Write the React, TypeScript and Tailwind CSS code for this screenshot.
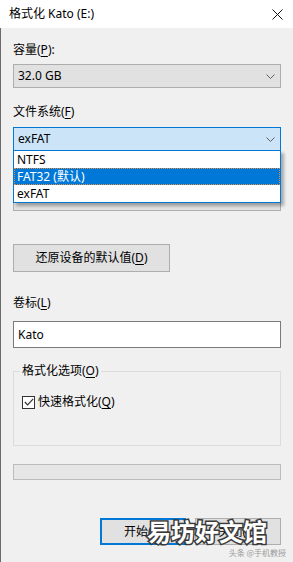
import React from 'react';

// Windows 10 "Format drive" dialog with the file system list opened

const Chevron: React.FC = () => (
  <svg width="9" height="5" viewBox="0 0 9 5" className="shrink-0">
    <polyline points="0.5,0.5 4.5,4.5 8.5,0.5" fill="none" stroke="#606060" strokeWidth="1" />
  </svg>
);

const Key: React.FC<{ k: string }> = ({ k }) => <span className="underline underline-offset-2">{k}</span>;

export default function App() {
  return (
    <div className="relative w-[293px] h-[562px] overflow-hidden bg-[#f0f0f0] text-[12px] leading-[16px] text-black font-['Noto_Sans','Noto_Sans_CJK_SC',sans-serif]">
      {/* Title bar */}
      <div className="h-[28px] bg-white flex items-center justify-between pl-[9px] pr-[10px]">
        <span>格式化 Kato (E:)</span>
        <svg width="11" height="11" viewBox="0 0 11 11">
          <path d="M0.5 0.5L10.5 10.5M10.5 0.5L0.5 10.5" stroke="#111" strokeWidth="1" />
        </svg>
      </div>

      {/* Body */}
      <div className="h-[534px] border-l border-[#6b6b6b] pl-[12px] pr-[12px] flex flex-col">
        <div className="mt-[14px] h-[16px]">
          容量(<Key k="P" />):
        </div>
        <div className="mt-[6px] h-[24px] border border-[#adadad] bg-[#e1e1e1] flex items-center justify-between pl-[4px] pr-[5px]">
          <span>32.0 GB</span>
          <Chevron />
        </div>

        <div className="mt-[16px] h-[16px]">
          文件系统(<Key k="F" />)
        </div>
        <div className="relative mt-[7px] h-[24px] z-10">
          <div className="h-full border border-[#0078d7] bg-[#cce4f7] flex items-center justify-between pl-[4px] pr-[5px]">
            <span>exFAT</span>
            <Chevron />
          </div>
          {/* Open dropdown list */}
          <div className="absolute left-0 right-0 top-[23px] border border-[#0078d7] bg-white shadow-[3px_3px_3px_rgba(0,0,0,0.3)]">
            <div className="h-[17px] flex items-center pl-[3px]">NTFS</div>
            <div className="h-[17px] flex items-center pl-[3px] bg-[#0078d7] text-white outline outline-1 outline-dotted outline-[#e0904a] -outline-offset-1">
              FAT32 (默认)
            </div>
            <div className="h-[17px] flex items-center pl-[3px]">exFAT</div>
          </div>
        </div>

        {/* Allocation size (hidden under the list) */}
        <div className="mt-[15px] h-[16px]">分配单元大小(<Key k="A" />)</div>
        <div className="mt-[5px] h-[24px] border border-[#adadad] bg-[#e1e1e1]" />

        <button
          type="button"
          className="mt-[33px] h-[28px] w-[157px] border border-[#adadad] bg-[#e1e1e1] flex items-center justify-center"
        >
          还原设备的默认值(<Key k="D" />)
        </button>

        <div className="mt-[23px] h-[16px]">
          卷标(<Key k="L" />)
        </div>
        <div className="mt-[10px] h-[27px] border border-[#7a7a7a] bg-white flex items-center pl-[4px]">Kato</div>

        <fieldset className="mt-[15px] h-[83px] border border-[#dcdcdc] px-[6px]">
          <legend className="px-[2px] h-[16px]">
            格式化选项(<Key k="O" />)
          </legend>
          <div className="mt-[15px] ml-[2px] h-[16px] flex items-center gap-[3px]">
            <span className="w-[13px] h-[13px] border border-[#333] bg-white flex items-center justify-center">
              <svg width="10" height="8" viewBox="0 0 10 8">
                <polyline points="0.8,4 3.6,6.8 9.2,0.8" fill="none" stroke="#333" strokeWidth="1.2" />
              </svg>
            </span>
            <span>
              快速格式化(<Key k="Q" />)
            </span>
          </div>
        </fieldset>

        <div className="mt-[18px] h-[16px] border border-[#bcbcbc] bg-[#e6e6e6]" />

        <div className="mt-[38px] flex justify-end gap-[9px]">
          <button
            type="button"
            className="w-[86px] h-[27px] border-2 border-[#0078d7] bg-[#e1e1e1] flex items-center justify-center"
          >
            开始(<Key k="S" />)
          </button>
          <button
            type="button"
            className="w-[86px] h-[27px] border border-[#adadad] bg-[#e1e1e1] flex items-center justify-center"
          >
            关闭(<Key k="C" />)
          </button>
        </div>
      </div>

      {/* Watermarks */}
      <div className="absolute left-[147px] top-[516px] text-[24px] leading-[30px] font-bold text-white [-webkit-text-stroke:3px_#3a3a3a] [paint-order:stroke_fill] font-['Noto_Sans_CJK_SC',sans-serif]">
        易坊好文馆
      </div>
      <div className="absolute right-[7px] top-[548px] text-[8px] leading-[10px] text-[#9a9a9a] font-['Noto_Sans_CJK_SC',sans-serif]">
        头条 @手机教授
      </div>
    </div>
  );
}
